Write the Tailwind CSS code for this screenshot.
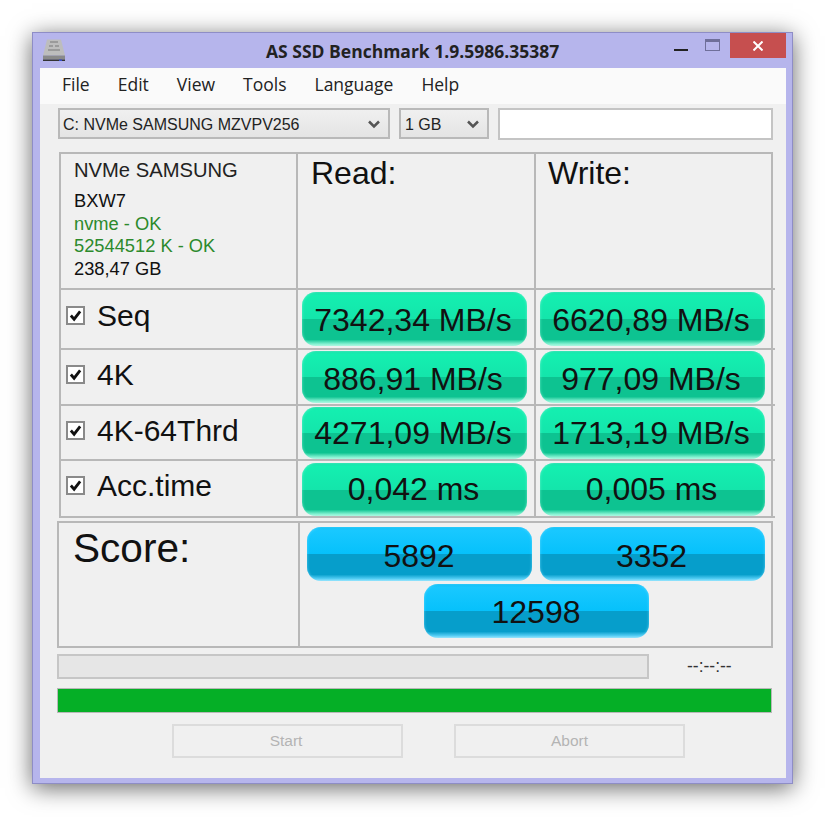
<!DOCTYPE html>
<html lang="en">
  <head>
    <meta charset="UTF-8" />
    <title>AS SSD Benchmark</title>
    <script src="https://cdn.jsdelivr.net/npm/@tailwindcss/browser@4"></script>
  </head>
  <body class="bg-white w-[825px] h-[817px] overflow-hidden pt-8 pl-8 font-['Liberation_Sans',sans-serif] text-[#111]">
    <div class="w-[761px] h-[752px] border border-[#8e8dc6] bg-[#b6b5ec] shadow-[0_4px_22px_rgba(0,0,0,0.6)] flex flex-col">
      <!-- title bar -->
      <div class="h-[35px] flex shrink-0 pl-[9px]">
        <svg class="w-6 h-6 mt-[5px] shrink-0" viewBox="0 0 24 24">
          <path d="M5 1.5h14l4 16H1z" fill="#bdbdbd" />
          <path d="M8 4h8M7 8h4M13 8h4M6 12h12" stroke="#9a9a9a" stroke-width="2" />
          <path d="M1 17.5h22v4H1z" fill="#8a8a8a" />
          <path d="M1 21.5h22V23H1z" fill="#333" />
          <path d="M17 21.5h3V23h-3z" fill="#3a4fc8" />
        </svg>
        <div class="w-[608px] pl-[200px] font-['Open_Sans',sans-serif] font-bold text-[17.5px] leading-[35px] text-[#222] pt-[1px] whitespace-nowrap shrink-0">AS SSD Benchmark 1.9.5986.35387</div>
        <div class="flex">
          <div class="w-[14px] h-[2px] bg-[#222] mt-[16px]"></div>
          <div class="w-[15px] h-[12px] border border-[#6f6f9a] border-t-[3px] mt-[6px] ml-[17px]"></div>
          <div class="w-14 h-[25px] bg-[#c64f4f] ml-[10px] flex items-center justify-center">
            <svg class="w-[10px] h-[10px]" viewBox="0 0 10 10"><path d="M0.5 0.5l9 9M9.5 0.5l-9 9" stroke="#fff" stroke-width="2" /></svg>
          </div>
        </div>
      </div>

      <!-- client area -->
      <div class="mx-[7px] w-[746px] h-[710px] bg-[#f0f0f0] flex flex-col">
        <div class="h-[36px] bg-[#fafafa] shrink-0 flex items-center pl-[22px] pb-[3px] gap-[28px] font-['Open_Sans',sans-serif] text-[17.5px] text-[#222]">
          <span>File</span><span>Edit</span><span>View</span><span>Tools</span><span>Language</span><span>Help</span>
        </div>

        <div class="flex pl-[18px] pt-[4px] h-[48px] shrink-0">
          <div class="w-[332px] h-[31px] border-2 border-[#b9b9b9] bg-[linear-gradient(#f0f0f0,#e4e4e4)] flex items-center justify-between pl-[3px] pr-[8px] pt-[2px] text-[16px] text-[#222]">
            <span>C: NVMe SAMSUNG MZVPV256</span>
            <svg class="w-[12px] h-[9px]" viewBox="0 0 12 9"><path d="M1 1.5l5 5 5-5" fill="none" stroke="#555" stroke-width="2.5" /></svg>
          </div>
          <div class="w-[90px] h-[31px] ml-[9px] border-2 border-[#b9b9b9] bg-[linear-gradient(#f0f0f0,#e4e4e4)] flex items-center justify-between pl-[4px] pr-[8px] pt-[2px] text-[16px] text-[#222]">
            <span>1 GB</span>
            <svg class="w-[12px] h-[9px]" viewBox="0 0 12 9"><path d="M1 1.5l5 5 5-5" fill="none" stroke="#555" stroke-width="2.5" /></svg>
          </div>
          <div class="w-[275px] h-[32px] ml-[9px] border-2 border-[#c4c4c4] bg-white"></div>
        </div>

        <!-- results table -->
        <div class="ml-[19px] w-[714px] grid grid-cols-[237px_238px_239px] grid-rows-[136px_60px_56px_55px_57px] border-t-2 border-l-2 border-r-2 border-[#b8b8b8]">
          <div class="border-b-2 border-r-2 border-[#b8b8b8] pl-[13px] pt-[2px] text-[18.3px] leading-[22.5px]">
            <div class="mb-[6px] text-[20.2px] leading-[28px] text-[#222]">NVMe SAMSUNG</div>
            <div>BXW7</div>
            <div class="text-[#2c8a2c]">nvme - OK</div>
            <div class="text-[#2c8a2c]">52544512 K - OK</div>
            <div>238,47 GB</div>
          </div>
          <div class="border-b-2 border-r-2 border-[#b8b8b8] pl-[13px] pt-[1px] text-[32px] leading-[37px]">Read:</div>
          <div class="border-b-2 border-[#b8b8b8] pl-[12px] pt-[1px] text-[32px] leading-[37px]">Write:</div>

          <div class="border-b-2 border-r-2 border-[#b8b8b8] flex items-center pl-[5px] pb-[7px] text-[30px]">
            <span class="w-[19px] h-[19px] mr-[12px] border-2 border-[#8a8a8a] bg-white flex items-center justify-center"><svg class="w-[13px] h-[13px]" viewBox="0 0 14 14"><path d="M2 7l3.5 4L12 2.5" fill="none" stroke="#111" stroke-width="3" /></svg></span>Seq
          </div>
          <div class="border-b-2 border-r-2 border-[#b8b8b8] pl-[4px] pt-[2px]">
            <div class="w-[225px] h-[54px] rounded-[14px] shadow-[inset_0_0_3px_rgba(120,245,210,0.8)] bg-[linear-gradient(#10dda5_0,#14efb0_6%,#14e5ab_50%,#0dc391_50%,#0dc391_88%,#7ff0cf_96%,#c5f8e8_100%)] flex items-center justify-center text-[32px] pt-[1px] pr-[3px]">7342,34 MB/s</div>
          </div>
          <div class="border-b-2 border-[#b8b8b8] pl-[4px] pt-[2px]">
            <div class="w-[225px] h-[54px] rounded-[14px] shadow-[inset_0_0_3px_rgba(120,245,210,0.8)] bg-[linear-gradient(#10dda5_0,#14efb0_6%,#14e5ab_50%,#0dc391_50%,#0dc391_88%,#7ff0cf_96%,#c5f8e8_100%)] flex items-center justify-center text-[32px] pt-[1px] pr-[3px]">6620,89 MB/s</div>
          </div>

          <div class="border-b-2 border-r-2 border-[#b8b8b8] flex items-center pl-[5px] pb-[5px] text-[30px]">
            <span class="w-[19px] h-[19px] mr-[12px] border-2 border-[#8a8a8a] bg-white flex items-center justify-center"><svg class="w-[13px] h-[13px]" viewBox="0 0 14 14"><path d="M2 7l3.5 4L12 2.5" fill="none" stroke="#111" stroke-width="3" /></svg></span>4K
          </div>
          <div class="border-b-2 border-r-2 border-[#b8b8b8] pl-[4px] pt-[1px]">
            <div class="w-[225px] h-[52px] rounded-[14px] shadow-[inset_0_0_3px_rgba(120,245,210,0.8)] bg-[linear-gradient(#10dda5_0,#14efb0_6%,#14e5ab_50%,#0dc391_50%,#0dc391_88%,#7ff0cf_96%,#c5f8e8_100%)] flex items-center justify-center text-[32px] pt-[3px] pr-[3px]">886,91 MB/s</div>
          </div>
          <div class="border-b-2 border-[#b8b8b8] pl-[4px] pt-[1px]">
            <div class="w-[225px] h-[52px] rounded-[14px] shadow-[inset_0_0_3px_rgba(120,245,210,0.8)] bg-[linear-gradient(#10dda5_0,#14efb0_6%,#14e5ab_50%,#0dc391_50%,#0dc391_88%,#7ff0cf_96%,#c5f8e8_100%)] flex items-center justify-center text-[32px] pt-[3px] pr-[3px]">977,09 MB/s</div>
          </div>

          <div class="border-b-2 border-r-2 border-[#b8b8b8] flex items-center pl-[5px] pb-[5px] text-[30px]">
            <span class="w-[19px] h-[19px] mr-[12px] border-2 border-[#8a8a8a] bg-white flex items-center justify-center"><svg class="w-[13px] h-[13px]" viewBox="0 0 14 14"><path d="M2 7l3.5 4L12 2.5" fill="none" stroke="#111" stroke-width="3" /></svg></span>4K-64Thrd
          </div>
          <div class="border-b-2 border-r-2 border-[#b8b8b8] pl-[4px] pt-[1px]">
            <div class="w-[225px] h-[52px] rounded-[14px] shadow-[inset_0_0_3px_rgba(120,245,210,0.8)] bg-[linear-gradient(#10dda5_0,#14efb0_6%,#14e5ab_50%,#0dc391_50%,#0dc391_88%,#7ff0cf_96%,#c5f8e8_100%)] flex items-center justify-center text-[32px] pb-[1px] pr-[3px]">4271,09 MB/s</div>
          </div>
          <div class="border-b-2 border-[#b8b8b8] pl-[4px] pt-[1px]">
            <div class="w-[225px] h-[52px] rounded-[14px] shadow-[inset_0_0_3px_rgba(120,245,210,0.8)] bg-[linear-gradient(#10dda5_0,#14efb0_6%,#14e5ab_50%,#0dc391_50%,#0dc391_88%,#7ff0cf_96%,#c5f8e8_100%)] flex items-center justify-center text-[32px] pb-[1px] pr-[3px]">1713,19 MB/s</div>
          </div>

          <div class="border-b-2 border-r-2 border-[#b8b8b8] flex items-center pl-[5px] pb-[7px] text-[30px]">
            <span class="w-[19px] h-[19px] mr-[12px] border-2 border-[#8a8a8a] bg-white flex items-center justify-center"><svg class="w-[13px] h-[13px]" viewBox="0 0 14 14"><path d="M2 7l3.5 4L12 2.5" fill="none" stroke="#111" stroke-width="3" /></svg></span>Acc.time
          </div>
          <div class="border-b-2 border-r-2 border-[#b8b8b8] pl-[4px] pt-[2px]">
            <div class="w-[225px] h-[53px] rounded-[14px] shadow-[inset_0_0_3px_rgba(120,245,210,0.8)] bg-[linear-gradient(#10dda5_0,#14efb0_6%,#14e5ab_50%,#0dc391_50%,#0dc391_88%,#7ff0cf_96%,#c5f8e8_100%)] flex items-center justify-center text-[32px] pb-[1px] pr-[2px]">0,042 ms</div>
          </div>
          <div class="border-b-2 border-[#b8b8b8] pl-[4px] pt-[2px]">
            <div class="w-[225px] h-[53px] rounded-[14px] shadow-[inset_0_0_3px_rgba(120,245,210,0.8)] bg-[linear-gradient(#10dda5_0,#14efb0_6%,#14e5ab_50%,#0dc391_50%,#0dc391_88%,#7ff0cf_96%,#c5f8e8_100%)] flex items-center justify-center text-[32px] pb-[1px] pr-[2px]">0,005 ms</div>
          </div>
        </div>

        <!-- score -->
        <div class="ml-[17px] mt-[3px] w-[716px] h-[127px] flex border-2 border-[#b8b8b8] shrink-0">
          <div class="w-[241px] border-r-2 border-[#b8b8b8] pl-[14px] pt-[2px] text-[40.6px] leading-[46px]">Score:</div>
          <div class="pl-[7px] pt-[4px] flex flex-col">
            <div class="flex gap-[8px]">
              <div class="w-[225px] h-[54px] rounded-[14px] shadow-[inset_0_0_3px_rgba(110,220,255,0.8)] bg-[linear-gradient(#06bdf5_0,#19c8ff_6%,#06c1fb_50%,#069ecb_50%,#069ecb_88%,#55cef5_96%,#a8e8fc_100%)] flex items-center justify-center text-[32px] pt-[3px] pr-[1px]">5892</div>
              <div class="w-[225px] h-[54px] rounded-[14px] shadow-[inset_0_0_3px_rgba(110,220,255,0.8)] bg-[linear-gradient(#06bdf5_0,#19c8ff_6%,#06c1fb_50%,#069ecb_50%,#069ecb_88%,#55cef5_96%,#a8e8fc_100%)] flex items-center justify-center text-[32px] pt-[3px] pr-[2px]">3352</div>
            </div>
            <div class="w-[225px] h-[54px] ml-[117px] mt-[3px] rounded-[14px] shadow-[inset_0_0_3px_rgba(110,220,255,0.8)] bg-[linear-gradient(#06bdf5_0,#19c8ff_6%,#06c1fb_50%,#069ecb_50%,#069ecb_88%,#55cef5_96%,#a8e8fc_100%)] flex items-center justify-center text-[32px] pt-[1px] pr-[1px]">12598</div>
          </div>
        </div>

        <div class="flex items-center ml-[17px] mt-[6px] shrink-0">
          <div class="w-[592px] h-[25px] border-2 border-[#c6c6c6] bg-[#e6e6e6]"></div>
          <span class="ml-[38px] pb-[2px] text-[17.5px] leading-[20px] text-[#333]">--:--:--</span>
        </div>
        <div class="ml-[17px] mt-[9px] w-[715px] h-[25px] border border-[#b8b8b8] bg-[#05af26] shrink-0"></div>

        <div class="flex ml-[132px] mt-[11px] gap-[51px] shrink-0">
          <div class="w-[231px] h-[34px] border-2 border-[#dcdcdc] flex items-center justify-center pr-[3px] text-[15.5px] text-[#b4b4b4]">Start</div>
          <div class="w-[231px] h-[34px] border-2 border-[#dcdcdc] flex items-center justify-center text-[15.5px] text-[#b4b4b4]">Abort</div>
        </div>
      </div>
    </div>
  </body>
</html>
